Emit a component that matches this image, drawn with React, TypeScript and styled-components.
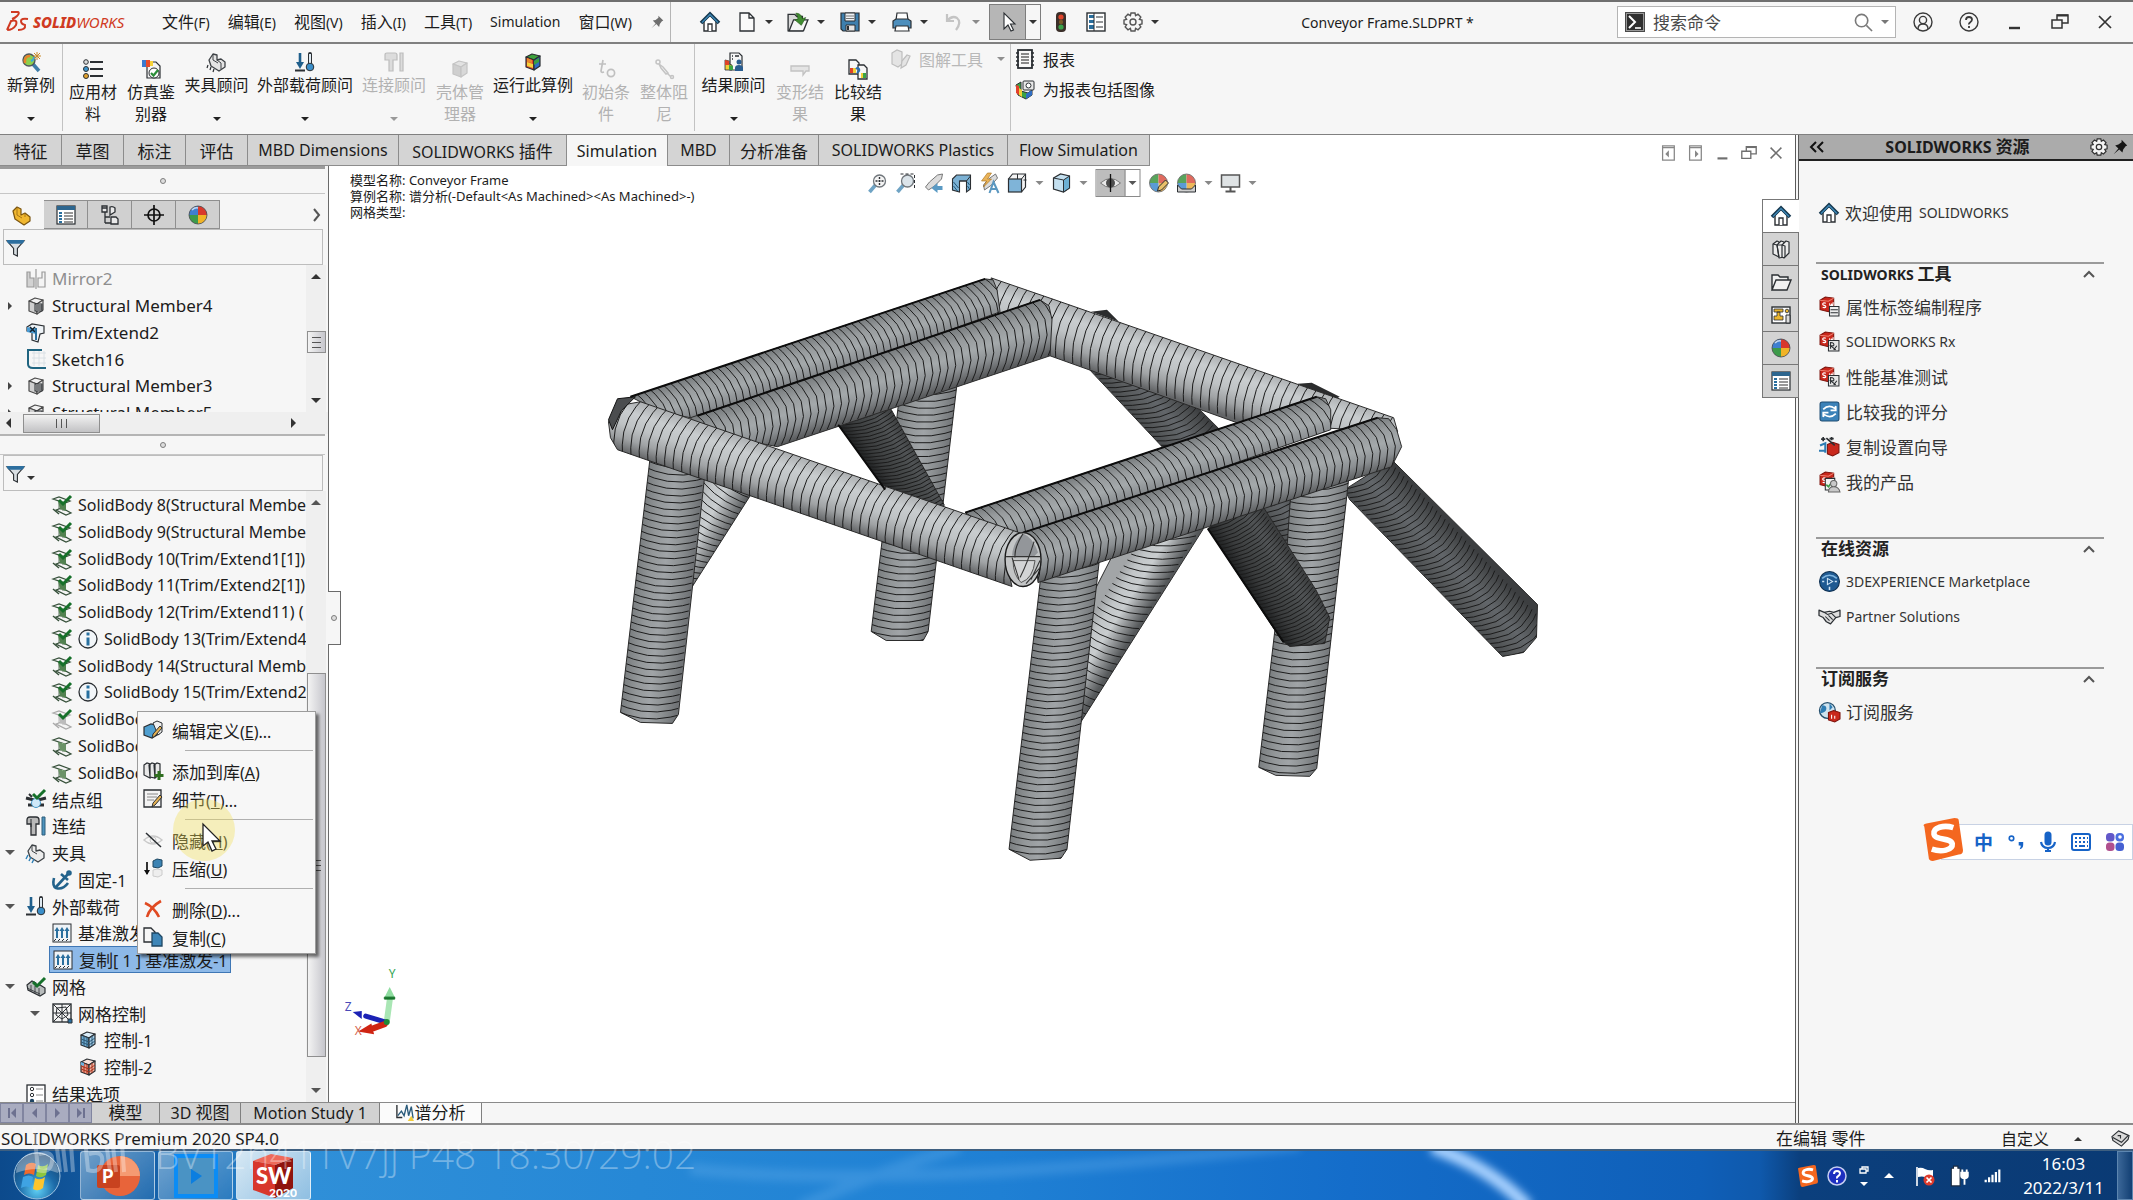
import React from 'react';
import styled, { createGlobalStyle, css } from 'styled-components';

const Global = createGlobalStyle`
  *, *::before, *::after { box-sizing: border-box; }
  body { margin: 0; background: #f6f6f6; }
  body, button, input { font-family: "Noto Sans", "Noto Sans CJK SC", sans-serif; color: #1c1c1c; }
  button { border: 0; padding: 0; background: none; }
  a { color: inherit; text-decoration: none; }
  ul { list-style: none; margin: 0; padding: 0; }
  svg { display: block; flex: none; }
`;

/* ---------- text ---------- */

const Cjk = styled.span<{ $size: number }>`
  font-size: ${(p) => p.$size}px;
`;

/* Chinese runs are set one step larger than the Latin text around them. */
function T({ s, z = 16 }: { s: string; z?: number }) {
  return (
    <span>
      {s.split(/([\u3000-\u9fff]+)/).map((part, i) =>
        i % 2 ? <Cjk key={i} $size={z}>{part}</Cjk> : part
      )}
    </span>
  );
}

/* ---------- icons, all on a 20 unit grid ---------- */

const K = '#2b2f33';
const B = '#2a6f9e';

const cube = (top: string, left: string, right: string, line = K) => (
  <g stroke={line} strokeWidth="1.2" strokeLinejoin="round">
    <path d="M3 5l6-3 8 2-6 4z" fill={top} />
    <path d="M3 5l8 3v10l-8-3z" fill={left} />
    <path d="M11 8l6-4v10l-6 4z" fill={right} />
  </g>
);

const swCube = (
  <g>
    <path d="M1 4l5-3 8 1v9l-5 4-8-2z" fill="#c9281c" stroke="#7c130c" />
    <path d="M1 4l8 1 5-3" fill="none" stroke="#f08070" />
    <path d="M6.5 7c-2-1-3 0-3 .8 0 1.3 3 1 3 2.4 0 1-2 1.3-3 .4M10 7l1 4 1-3 1 2 .5-4" fill="none" stroke="#fff" strokeWidth="1.1" />
  </g>
);

const check = <path d="M7 5l4 4 8-8" fill="none" stroke="#16702a" strokeWidth="3" />;

const beam = (g: string, l: string) => (
  <g>
    <path d="M1 4l6-2 11 4-5 2zM4 15l6-2 9 5-5 2z" fill="#f4f4f4" stroke={l} strokeWidth="1.2" />
    <path d="M6 6l8 2v8l-6-2z" fill={g} />
    <path d="M7 6v8M9 7v8M11 8v8M13 8v8" stroke={l} strokeWidth=".8" />
    <path d="M1 14l6 5" stroke={l} strokeWidth="1.5" />
  </g>
);

const house = (
  <g>
    <path d="M4 9v10h12V9l-6-6z" fill="#fff" stroke={K} strokeWidth="1.4" />
    <path d="M8 19v-7h4v7" fill="#fff" stroke={K} strokeWidth="1.3" />
    <path d="M1 11l9-9 9 9" fill="none" stroke="#17384f" strokeWidth="3.6" />
    <path d="M2 10.5l8-8 8 8" fill="none" stroke="#3d86b4" strokeWidth="1.4" />
  </g>
);

const ball = (
  <g>
    <path d="M10 10V1a9 9 0 0 0-9 9z" fill="#3f7fd0" />
    <path d="M10 10V1a9 9 0 0 1 9 9z" fill="#d8382c" />
    <path d="M10 10h9a9 9 0 0 1-9 9z" fill="#f0b326" />
    <path d="M10 10H1a9 9 0 0 0 9 9z" fill="#3d9a4a" />
    <circle cx="10" cy="10" r="9" fill="none" stroke="#44484c" strokeWidth=".8" />
    <path d="M4 5q3-3 6-2" stroke="#fff" strokeWidth="1.5" fill="none" opacity=".7" />
  </g>
);

const viewBall = (
  <g>
    <path d="M10 10V1a9 9 0 0 0-9 9z" fill="#58a45c" />
    <path d="M10 10V1a9 9 0 0 1 9 9z" fill="#e06a5e" />
    <path d="M10 10h9a9 9 0 0 1-9 9z" fill="#eeb85a" />
    <path d="M10 10H1a9 9 0 0 0 9 9z" fill="#5b9bd6" />
    <circle cx="10" cy="10" r="9" fill="none" stroke="#666" strokeWidth=".8" />
  </g>
);

const excitation = (
  <g>
    <rect x="1" y="1" width="18" height="18" fill="#eef3f7" stroke={K} />
    <path d="M5 15V6M10 15V6M15 15V6" stroke={B} strokeWidth="2" />
    <path d="M2.5 8L5 4l2.5 4M7.500 8L10 4l2.5 4M12.500 8L15 4l2.5 4" fill={B} />
    <path d="M2 18l2-2M6 18l2-2M10 18l2-2M14 18l2-2" stroke={K} />
  </g>
);

const mag = (fill: string) => (
  <g>
    <path d="M8 12l-6 7" stroke="#6fa3c4" strokeWidth="3.6" />
    <circle cx="12" cy="8" r="6" fill={fill} stroke="#70767b" strokeWidth="1.3" />
  </g>
);

const solidPart = (c1: string, c2: string) => (
  <path d="M2 8l4-6 4 1v5l4-1 4 3v5l-6 4-8-5z" fill={c1} stroke={c2} strokeWidth="1.3" strokeLinejoin="round" />
);

const pencil = <path d="M9 18l1-4 7-8 2 2-7 8z" fill="#e3b052" stroke={K} />;

const sogou = (
  <g>
    <path d="M2 4Q1 3 3 2.500L16 0q2 0 2 1l2 14q0 2-2 2L6 20q-2 0-2-2z" fill="#f4671f" />
    <path d="M15.500 4.500C11 3 6 4.500 6.500 7.500c.5 3 8 1.5 8.500 4.500.3 3-5 4-9.500 2.500" fill="none" stroke="#fff" strokeWidth="2.6" />
  </g>
);

const icons: Record<string, React.ReactNode> = {
  home: house,
  doc: <path d="M3 1h9l5 5v13H3zM12 1v5h5" fill="#fafafa" stroke={K} strokeWidth="1.3" />,
  open: <g><path d="M1 3h6l2 2h5v13H1z" fill="#d9d9d9" stroke={K} strokeWidth="1.2" /><path d="M2 18l4-10h13l-4 10z" fill="#f5f5f5" stroke={K} strokeWidth="1.2" /><path d="M8 2q5 0 6 5l3-1-4 7-6-5 3-.5Q10 4 8 2z" fill="#3f8b2f" stroke="#235a18" strokeWidth=".6" /></g>,
  save: <g><path d="M1 1h18v18H3l-2-2z" fill="#3d7fae" stroke={K} strokeWidth="1.2" /><path d="M5 1h10v8H5z" fill="#eef2f5" stroke={K} /><path d="M6 4h8M6 6.500h8" stroke="#777" /><path d="M6 13h9v6H6z" fill="#e6e6e6" stroke={K} /><path d="M8 14v4" stroke={K} strokeWidth="2" /></g>,
  print: <g><path d="M5 1h10l1 7H4z" fill="#fff" stroke={K} strokeWidth="1.2" /><path d="M1 9l3-2h12l3 2v7H1z" fill="#4d8fbd" stroke={K} strokeWidth="1.2" /><path d="M4 14h12l1 5H3z" fill="#fff" stroke={K} strokeWidth="1.2" /></g>,
  undo: <path d="M3 2v7h7M3 9q5-6 10-3 5 4-1 12" fill="none" stroke="#c4c4c4" strokeWidth="2.2" />,
  pointer: <path d="M6 1v16l4-4 3 6 2.5-1-3-6H17z" fill="#fff" stroke={K} strokeWidth="1.1" />,
  traffic: <g><rect x="5" y="0" width="10" height="20" rx="4" fill="#3b2f2a" /><circle cx="10" cy="5" r="2.6" fill="#e0452b" /><circle cx="10" cy="10" r="2.2" fill="#7a5a28" /><circle cx="10" cy="15" r="2.6" fill="#3ba24a" /></g>,
  list: <g><rect x="1" y="1" width="18" height="18" fill="#fff" stroke={K} strokeWidth="1.4" /><path d="M3 3h5v3H3zM3 8h5v3H3zM3 13h5v4H3z" fill={B} /><path d="M8 1v18M10 5h7M10 10h7M10 15h7" stroke={K} /></g>,
  gear: <g fill="none" stroke="#555" strokeWidth="1.4"><path d="M8 1h4l.6 2.600 2.400-1.400 2.800 2.800-1.400 2.400L19 8v4l-2.600.6 1.400 2.400-2.800 2.800-2.400-1.400L12 19H8l-.6-2.600L5 17.800 2.200 15l1.400-2.400L1 12V8l2.600-.6L2.200 5 5 2.200l2.400 1.400z" /><circle cx="10" cy="10" r="3" /></g>,
  paneGear: <g fill="#f4f4f4" stroke="#333" strokeWidth="1.4"><path d="M8 1h4l.6 2.600 2.400-1.400 2.800 2.800-1.400 2.400L19 8v4l-2.600.6 1.400 2.400-2.800 2.800-2.400-1.400L12 19H8l-.6-2.600L5 17.800 2.200 15l1.400-2.400L1 12V8l2.600-.6L2.200 5 5 2.200l2.400 1.400z" /><circle cx="10" cy="10" r="3" /></g>,
  pin: <path d="M12 1l7 7-2 1-3 4-1 4-4-4-7 6 6-7-4-4 4-1 4-3z" fill="#6e6e6e" />,
  pinDark: <path d="M12 1l7 7-2 1-3 4-1 4-4-4-7 6 6-7-4-4 4-1 4-3z" fill="#161616" />,
  cmd: <g><rect width="20" height="20" fill="#4a4a4a" /><rect x="1.5" y="1.5" width="17" height="17" fill="#2f2f2f" stroke="#999" /><path d="M4 4l6 6-6 6" fill="none" stroke="#fff" strokeWidth="2" /><path d="M10 16h6" stroke="#fff" strokeWidth="1.6" /></g>,
  search: <g fill="none" stroke="#7a7a7a" strokeWidth="1.7"><circle cx="8" cy="8" r="6.5" /><path d="M13 13l6 6" /></g>,
  user: <g fill="none" stroke="#3a3a3a" strokeWidth="1.4"><circle cx="10" cy="10" r="9" /><circle cx="10" cy="8" r="3.6" /><path d="M5 17q0-5 5-5t5 5" /></g>,
  help: <g fill="none" stroke="#3a3a3a" strokeWidth="1.4"><circle cx="10" cy="10" r="9" /><path d="M7 8q0-3 3-3t3 2.600q0 1.500-1.700 2.600T10 12.500M10 14v2" strokeWidth="1.8" /></g>,
  min: <path d="M5 16h11" stroke="#333" strokeWidth="2.4" />,
  restore: <g fill="none" stroke="#333" strokeWidth="1.5"><path d="M2 8h10v8H2zM7 8V3h11v8h-6" /><path d="M7 3.500h11" strokeWidth="2" /></g>,
  close: <path d="M4 4l12 12M16 4L4 16" stroke="#333" strokeWidth="1.7" />,
  paneL: <g fill="none" stroke="#555" strokeWidth="1.4"><path d="M4 2h13v16H4zM4 4h13" /><path d="M11 7l-4 4 4 4z" fill="#555" stroke="none" /></g>,
  paneR: <g fill="none" stroke="#555" strokeWidth="1.4"><path d="M4 2h13v16H4zM4 4h13" /><path d="M10 7l4 4-4 4z" fill="#555" stroke="none" /></g>,
  study: <g><path d="M11 11l7 8" stroke="#3f7da8" strokeWidth="3.6" /><circle cx="8" cy="8" r="6" fill="#8ccf4d" stroke="#50565b" strokeWidth="1.4" /><path d="M4 11Q3 4 9 4" stroke="#e8832a" strokeWidth="2.5" fill="none" /><path d="M10 9q3-1 3-4" stroke="#3fa7d8" strokeWidth="2" fill="none" /><path d="M16 0v8M12 4h8M13 1l6 6M19 1l-6 6" stroke="#c98a2a" /></g>,
  material: <g><path d="M7 3h13M7 10h13M7 17h13" stroke={K} strokeWidth="2.2" /><circle cx="3" cy="3" r="2.3" fill="#ddd" stroke={K} /><circle cx="3" cy="10" r="2.5" fill="#3e95cc" stroke={K} /><circle cx="3" cy="17" r="2.5" fill="#e2a12d" stroke={K} /></g>,
  evaluator: <g><path d="M6 3h9l4 4v12H6z" fill="#f4f4f4" stroke={K} strokeWidth="1.2" /><path d="M1 1h4v7H1z" fill="#3c7bd0" /><path d="M5 1h4v7H5z" fill="#e94b2c" /><path d="M9 2h3v5H9z" fill="#f6d33a" /><circle cx="13" cy="14" r="5" fill="#fff" stroke={K} /><path d="M10 14l2.500 2.500L17 11" stroke="#2c8f3a" strokeWidth="2.2" fill="none" /></g>,
  fixture: <g>{solidPart('#e4e4e4', '#3e4246')}<path d="M6 2v6l5 3M10 8l4 3v6" fill="none" stroke="#3e4246" /><path d="M1 13l-1 3M4 15l-1 3M7 17l-1 3" stroke={K} strokeWidth="1.2" /></g>,
  fixtureTree: <g>{solidPart('#ececec', '#3e4246')}<path d="M6 2v6l5 3" fill="none" stroke="#3e4246" /><path d="M2 12l-2 4M5 14l-2 4M8 16l-2 4" stroke="#2d7fb5" strokeWidth="1.4" /></g>,
  loads: <g><path d="M5 1v12" stroke="#1f5f8c" strokeWidth="2.6" /><path d="M1 10h8l-4 7z" fill="#1f5f8c" /><path d="M0 18.500h10" stroke={K} strokeWidth="2" /><path d="M15 2v12" stroke={K} strokeWidth="4" strokeLinecap="round" /><path d="M15 2v12" stroke="#dfeaf2" strokeWidth="2" /><circle cx="15" cy="15" r="3.8" fill="#3b8fca" stroke={K} /></g>,
  connectorOff: <g fill="#dcdcdc" stroke="#bdbdbd" strokeWidth="1.2"><path d="M1 3q0-2 2-2h8q2 0 2 2v5H9v11H5V8H1zM16 1h3v18h-3z" /></g>,
  connector: <g><path d="M1 4q0-3 3-3h6q3 0 3 3v4h-3v11H5V8H1z" fill="#b9b9b9" stroke={K} strokeWidth="1.3" /><path d="M5 3v8" stroke={K} /><path d="M16 1h3v18h-3z" fill="#4d93bd" stroke="#2c5c7a" /></g>,
  shellOff: cube('#e2e2e2', '#cfcfcf', '#d8d8d8', '#c4c4c4'),
  run: <g>{cube('#3da23c', '#e2412c', '#2f6dc4')}<path d="M4 6l5 2v3l-5-1z" fill="#e8872d" /><path d="M4 10l6 2v4l-6-2z" fill="#f5d23a" /><path d="M11 9l5-3v4l-5 3z" fill="#3aa040" /></g>,
  initialOff: <g fill="none" stroke="#c0c0c0" strokeWidth="1.7"><path d="M7 1L5 12q0 2 3 1M3 5h7" /><circle cx="15" cy="14" r="3.6" /></g>,
  dampOff: <g fill="none" stroke="#c4c4c4" strokeWidth="1.5"><circle cx="4" cy="3" r="2" /><path d="M5 5l4 3 5 6-2 1-5-6zM13 14l4 4" /><circle cx="18" cy="18" r="1.5" /></g>,
  results: <g><path d="M6 1h9l3 3v14H6z" fill="#f6f6f6" stroke={K} strokeWidth="1.2" /><path d="M1 8l4 1v3l3 1v5H1z" fill="#f1cf36" stroke={K} strokeWidth=".8" /><path d="M1 8l4 1v4H1z" fill="#df4228" /><path d="M5 13l4 1v4H5z" fill="#3aa344" /><circle cx="15" cy="10" r="2.5" fill="#285c8f" /><path d="M11 19v-3q0-3 4-3t4 3v3z" fill="#285c8f" /><path d="M8 4h1M11 4h4M8 7h1" stroke={K} strokeWidth="1.5" /></g>,
  deformOff: <path d="M1 7h18v5h-3l-3 4v-4H1z" fill="#e4e4e4" stroke="#c2c2c2" strokeWidth="1.3" />,
  compare: <g><path d="M1 1h7l3 3v11H1z" fill="#f6f6f6" stroke={K} strokeWidth="1.3" /><path d="M10 6h6l3 3v11h-9z" fill="#f6f6f6" stroke={K} strokeWidth="1.3" /><path d="M2 9h3v5H2z" fill="#df4228" /><path d="M5 9h3v5H5z" fill="#f1cf36" /><path d="M13 14h2v5h-2z" fill="#f1cf36" /><path d="M15 14h3v5h-3z" fill="#3aa344" /><path d="M8 10q2-2 3 0t-2 4" stroke="#2a6fb0" strokeWidth="2" fill="none" /></g>,
  plotOff: <g fill="#e4e4e4" stroke="#bebebe" strokeWidth="1.2"><path d="M1 4l5-3 5 2v12l-4 3-6-3z" /><path d="M11 12l5-6 3 1-4 9-5 3z" /></g>,
  report: <g><rect x="3" y="1" width="14" height="18" fill="#f8f8f8" stroke={K} strokeWidth="1.8" /><path d="M6 5h8M6 8h8M6 11h8M6 14h8" stroke="#666" strokeWidth="1.5" /><path d="M1 4h3M1 8h3M1 12h3M1 16h3M16 4h3M16 8h3M16 12h3M16 16h3" stroke={K} strokeWidth="1.5" /></g>,
  reportImg: <g><path d="M1 6l5-3v9l7 2 4-3v5l-6 4-8-4z" fill="#3aa344" stroke={K} /><path d="M1 6l3 1v9l-3-2z" fill="#e2412c" /><path d="M4 9l3 2v7l-3-2z" fill="#f1cf36" /><path d="M11 15l6-4v5l-6 4z" fill="#2f6dc4" /><rect x="8" y="2" width="11" height="9" rx="1" fill="#e8e8e8" stroke={K} /><circle cx="13.5" cy="6.5" r="2.5" fill="#fff" stroke={K} /></g>,
  partTab: <g><path d="M1 6l4-4 4 2v6l4-2 5 4v4l-6 4-9-6z" fill="#f0b730" stroke="#7b5510" strokeWidth="1.2" strokeLinejoin="round" /><path d="M5 3v7l5 3M13 9v3" stroke="#a87717" fill="none" /></g>,
  propTab: <g><rect x="1" y="1" width="18" height="18" fill="#fff" stroke={K} strokeWidth="1.2" /><path d="M1 1h18v4H1z" fill="#2d668f" /><path d="M3 8h3M3 11h3M3 14h3M3 17h3" stroke={B} strokeWidth="2" /><path d="M8 8h9M8 11h9M8 14h9M8 17h9" stroke="#777" strokeWidth="1.5" /></g>,
  configTab: <g fill="#e9e9e9" stroke={K} strokeWidth="1.3"><path d="M5 7v11" /><path d="M2 1h5v6H2zM2 3h5" /><path d="M5 12h5M5 18h6" /><path d="M10 2q3-1 5 1v4l-5 3zM11 12h5l2 2v5h-7z" /></g>,
  dimTab: <g fill="none" stroke="#111" strokeWidth="1.7"><circle cx="10" cy="10" r="6" /><path d="M10 0v20M0 10h20" /></g>,
  ball,
  funnel: <g><path d="M1 3h18l-7 8v8l-4-2v-6z" fill="#d9dfe3" stroke={K} strokeWidth="1.2" /><path d="M1 2h18v2l-2 2H3L1 4z" fill="#2d6f9f" /></g>,
  mirror: <g fill="#d2d2d2" stroke="#9a9a9a" strokeWidth="1.2"><path d="M1 3h3v6h4v9H1z" /><path d="M19 3h-3v6h-4v9h7z" fill="#f4f4f4" /><path d="M10 0v20" /></g>,
  member: <g>{cube('#f1f1f1', '#cfcfcf', '#e6e6e6', '#4a4a4a')}<rect x="9" y="8" width="7" height="7" fill="#c6c6c6" stroke={K} /><path d="M11 9v5M13 9v5M15 9v5" stroke={K} /></g>,
  trim: <g><path d="M1 4l5-3 12 2v7l-4 1-2 8-6-2V9L1 8z" fill="#eef3f7" stroke={K} strokeWidth="1.2" /><path d="M1 4l9 2v5L1 9z" fill="#4a9bd3" /><path d="M4 4l5 5M9 4L4 9" stroke="#12222e" strokeWidth="1.5" /><path d="M10 5v12" stroke={B} strokeWidth="2" /></g>,
  sketch: <g><path d="M6 4h14M6 9h14M6 14h14M8 2v15M13 2v15M18 2v15" stroke="#d5dde2" strokeWidth=".8" /><path d="M16 1H2v14q0 4 5 4h13" fill="none" stroke="#1f6480" strokeWidth="2" /></g>,
  body: <g>{beam('#66a35f', '#36503a')}{check}</g>,
  bodyOff: <g>{beam('#c9c9c9', '#a9a9a9')}{check}</g>,
  bodyPlain: beam('#8fbf86', '#36503a'),
  info: <g><circle cx="10" cy="10" r="9" fill="#f2f6f9" stroke={K} strokeWidth="1.3" /><path d="M10 3.500v3M10 8.500v8" stroke="#2870a0" strokeWidth="3" /></g>,
  joints: <g><path d="M0 9l8 2M20 9l-8 2M2 16h16" stroke={K} strokeWidth="3" /><circle cx="10" cy="14" r="4.5" fill="#cfe8f8" stroke="#4697c7" /><path d="M3 5l3 3" stroke={K} strokeWidth="2" />{check}</g>,
  anchor: <g fill="none" stroke="#23638c" strokeWidth="2.6"><path d="M16 4L4 17M2 8q-2 8 2 10 7 2 12-5M9 4l7 6" /><circle cx="17" cy="3" r="1.5" /></g>,
  excitation,
  mesh: <g><path d="M1 8l5-4 4 2v3l4-1 5 3v5l-5 3-12-6z" fill="#b8bcbc" stroke={K} strokeWidth="1.2" /><path d="M5 8v6M9 9v7M13 11v7M1 11l13 6" stroke={K} strokeWidth=".8" />{check}</g>,
  meshCtl: <g fill="none" stroke={K}><rect x="1" y="1" width="18" height="18" fill="#f3f3f3" strokeWidth="1.4" /><path d="M1 1l18 18M19 1L1 19M10 1v18M1 10h18M5 5l9-1 2 8-6 4-6-4z" /><path d="M16 16h4v4h-4z" fill={B} /></g>,
  ctl1: <g>{cube('#d9ecf8', '#6fa9cf', '#a6cde6')}<path d="M6 6v10M9 7v10M14 6v10M3 9l8 3 6-4M3 12l8 3 6-4" stroke="#2d5976" fill="none" /></g>,
  ctl2: <g>{cube('#fbe3dc', '#ee9a86', '#f3b9a8')}<path d="M6 6v10M9 7v10M14 6v10M3 9l8 3 6-4M3 12l8 3 6-4" stroke="#a8321c" fill="none" /><path d="M3 5l3 1v3l-3-1z" fill="#6ab1e0" /></g>,
  resultOpt: <g><rect x="1" y="1" width="18" height="22" fill="#fff" stroke={K} strokeWidth="1.3" /><g fill="#fff" stroke={K}><circle cx="6" cy="5" r="1.7" /><circle cx="6" cy="11" r="1.7" /></g><circle cx="6" cy="17" r="2.2" fill="#1d4464" /><path d="M10 5h7M10 11h7M10 17h7" stroke="#888" /></g>,
  editDef: <g><path d="M1 7l7-3 8 2v8l-7 4-8-3z" fill="#4f9fd0" stroke={K} strokeWidth="1.2" /><path d="M10 3l4-2 5 2v9l-4 3z" fill="#f0f0f0" stroke={K} />{pencil}</g>,
  addLib: <g><path d="M1 4l3-2 3 1v14l-6-3zM6 4l3-2 3 1v14l-5-1zM11 4l3-2 3 1v10l-5 4z" fill="#e9e9e9" stroke={K} strokeWidth="1.2" /><path d="M16 10v9M11.500 14.500h9" stroke="#2f6f1f" strokeWidth="3" /></g>,
  detail: <g><path d="M1 1h17v17H1z" fill="#f3f3f3" stroke={K} strokeWidth="1.3" /><path d="M4 5h11M4 8h10M4 11h7" stroke="#888" />{pencil}</g>,
  hide: <g fill="none"><path d="M1 10q9-8 18 0-9 8-18 0z" stroke="#c9c9c9" strokeWidth="1.5" /><circle cx="10" cy="10" r="3" stroke="#c9c9c9" /><path d="M3 3l15 14" stroke={K} strokeWidth="1.5" /></g>,
  suppress: <g><path d="M4 4v12" stroke="#111" strokeWidth="1.7" /><path d="M1 12h6l-3 5z" fill="#111" /><path d="M10 3l4-2 5 1v6l-4 2-5-1z" fill="#3c83b3" stroke="#1e4660" /><path d="M10 12l4-1 5 1v5l-4 2-5-1z" fill="#eee" stroke="#ccc" /></g>,
  del: <path d="M2 4q9 4 14 14M18 2Q7 8 4 18" fill="none" stroke="#e04a22" strokeWidth="2.6" />,
  copy: <g><path d="M1 1h7l4 4v10H1z" fill="#f6f6f6" stroke={K} strokeWidth="1.3" /><path d="M9 6h6l4 4v9H9z" fill="#3e86b8" stroke="#1f4763" strokeWidth="1.3" /></g>,
  zoomFit: <g>{mag('#f4f4f4')}<path d="M12 4v8M8 8h8" stroke={K} strokeWidth="1.4" strokeDasharray="2 1" /></g>,
  zoomArea: <g>{mag('#dbe4ea')}<path d="M5 1h14v14" fill="none" stroke={K} strokeDasharray="3 2" /></g>,
  prevView: <g><path d="M2 14l4-5 8-7 5-1-1 5-7 7-6 4z" fill="#dcdcdc" stroke="#777" /><path d="M19 13h-5v-3l-6 5 6 5v-3h5z" fill="#5a9ac4" /></g>,
  section: <g><path d="M1 6l4-4h14v14l-4 3V8H8v11l-7-2z" fill="#7bb1d4" stroke={K} strokeWidth="1.1" /><path d="M8 8h7l4-5" fill="none" stroke={K} /><path d="M2 9l5 6M2 13l4 5M16 9l2 3M16 13l2 3" stroke="#1f5678" /></g>,
  dynView: <g><path d="M4 12l5-6 7-5 2 4-6 7-7 5z" fill="#dcdcdc" stroke="#777" /><path d="M8 0L2 8h5l-3 6 8-8H8l4-6z" fill="#e9b35a" stroke="#a66b10" strokeWidth=".6" /><path d="M10 20l4-11 5 11M12 16h5" fill="none" stroke="#5a97c0" strokeWidth="2" /></g>,
  orient: <g><path d="M1 6l4-5h13v13l-4 5" fill="#f4f4f4" stroke={K} strokeWidth="1.2" /><rect x="1" y="6" width="13" height="13" fill="#7fb4d8" stroke={K} strokeWidth="1.2" /><path d="M14 6l4-5M10 1v5M16 7h3" stroke={K} /></g>,
  display: <g><path d="M2 5l7-4 9 2v12l-6 4-10-3z" fill="#c4e0f0" stroke={K} strokeWidth="1.2" /><path d="M12 7v12l6-4V3z" fill="#6db0d4" stroke={K} /><path d="M2 5l10 2" stroke={K} /></g>,
  eye: <g><path d="M0 10Q10 1 20 10 10 19 0 10z" fill="#e9e9e9" stroke="#777" /><circle cx="10" cy="10" r="4.5" fill="#4d4d4d" /><path d="M10 1v18" stroke="#111" strokeWidth="1.3" /></g>,
  appear: <g>{viewBall}<path d="M9 18l1-4 7-7 3 3-7 7z" fill="#e8c069" stroke={K} /></g>,
  scene: <g>{viewBall}<path d="M1 12v7h18v-7l-4 4H5z" fill="#cfcfcf" stroke={K} /></g>,
  monitor: <g><rect x="1" y="2" width="18" height="12" fill="#dfe3e5" stroke="#555" strokeWidth="1.5" /><path d="M10 14v4M5 18.500h10" stroke="#555" strokeWidth="2" /></g>,
  library: <g fill="#ececec" stroke={K} strokeWidth="1.2" strokeLinejoin="round"><path d="M2 5l4-3 2 1v15l-6-3z" /><path d="M6 6l4-4 3 1v15l-5 1z" /><path d="M11 6l4-4 3 1v11l-5 5-2-1z" /><path d="M2 5l4 1 2 12M6 6l5 0M11 6l3 1v11" fill="none" /></g>,
  folder: <path d="M1 18V3h6l2 2h8v3M1 18L5 8h15l-4 10z" fill="#f1f1f1" stroke={K} strokeWidth="1.4" />,
  palette: <g><rect x="1" y="2" width="18" height="16" fill="#fff" stroke={K} strokeWidth="1.4" /><path d="M3 4h9v3H3zM6 7h3v4h3v4H3v-4h3z" fill="#e9b52e" stroke={K} strokeWidth=".8" /><circle cx="16" cy="6" r="1.8" fill="#e9b52e" stroke={K} strokeWidth=".8" /><path d="M15 10h4v8h-4z" fill="#ddd" stroke={K} /></g>,
  swTab: <g>{swCube}<path d="M10 10h9v9h-9z" fill="#eee" stroke={K} /><path d="M11 13h7M11 16h7" stroke={K} /></g>,
  swRx: <g>{swCube}<path d="M9 9h10v10H9z" fill="#e6e6e6" stroke={K} /><path d="M11 17v-6q4 0 3 3h-3l5 4M17 14l-3 4" stroke={K} fill="none" /></g>,
  score: <g><rect x="1" y="1" width="18" height="18" rx="2" fill="#3c82b8" stroke="#1d4c73" /><path d="M4 8q5-5 11-1l1-2v4h-5M16 12q-5 5-11 1l-1 2v-4h5" fill="none" stroke="#fff" strokeWidth="1.6" /></g>,
  wizard: <g><path d="M8 8l5-2 6 2v8l-6 3-5-2z" fill="#c9281c" stroke="#7c130c" /><path d="M1 9l5-2v9M0 14h6" stroke="#2f7db4" strokeWidth="2" fill="none" /><path d="M7 2l8 7M4 1v4M2 3h4M12 1v3M10 2.500h4" stroke={K} strokeWidth="1.6" /></g>,
  products: <g>{swCube}<path d="M6 7h9v11H6z" fill="#f2f2f2" stroke={K} /><path d="M7 13l2 2 3-4" fill="none" stroke="#3a9b45" strokeWidth="1.5" /><path d="M9 20q0-5 5-5t6 5zM14 9a3 3 0 0 1 0 6 3 3 0 0 1 0-6z" fill="#c9c9c9" stroke="#666" /></g>,
  compass: <g><circle cx="10" cy="10" r="9.5" fill="#1f5a92" stroke="#0e2f50" /><path d="M3 7q7-6 14 0" fill="none" stroke="#7fb5e0" strokeWidth="1.5" /><path d="M8 7l5 3-5 3z" fill="none" stroke="#cfe4f5" /><path d="M10 15v3M3 10h2M15 10h2" stroke="#cfe4f5" strokeWidth="1.5" /></g>,
  hands: <g strokeLinejoin="round"><path d="M0 4l5 2 5-1 4 1 6-2v6l-4 1-5 6-4-2-3-4-4-2z" fill="#dedede" stroke={K} strokeWidth="1.2" /><path d="M6 10l4 4M9 9l4 4M5 6l3 2 4-1 4 4" fill="none" stroke={K} strokeWidth="1" /></g>,
  globe: <g><circle cx="8" cy="9" r="7.5" fill="#cfe3ef" stroke="#25506e" strokeWidth="1.3" /><path d="M3 4q4 0 4 3t-3 4-3 0M10 2l3 4-3 3" fill="#2f7db4" /><path d="M9 11l5-2 6 2v6l-5 3-6-2z" fill="#c9281c" stroke="#7c130c" /><path d="M12 13v4M15 14v3" stroke="#fff" /></g>,
  tag: <g fill="#d9d9d9" stroke={K} strokeWidth="1.2"><path d="M1 8l7-6 11 5-1 4-7 7L2 12z" /><path d="M2 9l9 5 7-7M7 7h3v3" fill="none" /></g>,
  chart: <g fill="none"><path d="M1 1v14h6" stroke={K} strokeWidth="1.5" /><path d="M2 13l4-5 3 5 3-12 2 12 3-10 2 13" stroke="#2a5a7a" strokeWidth="1.5" /><path d="M13 19l4-6 3 6z" fill="#f2cb3c" /></g>,
  sogou,
  winHelp: <g><circle cx="10" cy="10" r="9" fill="#1d2fc0" stroke="#c5cdf0" strokeWidth="1.5" /><path d="M7 8q0-3 3-3t3 2.600q0 1.500-1.700 2.400T10 12.500M10 14v2.500" stroke="#fff" strokeWidth="2" fill="none" /></g>,
  flag: <g><path d="M2 1v19" stroke="#fff" strokeWidth="1.6" /><path d="M3 2q4-1 7 1 4 2 8 1v8q-4 1-8-1-3-1-7 0z" fill="#fff" /><circle cx="14" cy="14" r="5.5" fill="#dd3a2c" /><path d="M11.500 11.500l5 5M16.500 11.500l-5 5" stroke="#fff" strokeWidth="1.7" /></g>,
  battery: <g><path d="M3 3h2V1h4v2h2v16H3z" fill="#fff" stroke="#1b2b40" /><path d="M13 4v3M17 4v3M12 7h6v3q0 2-3 2t-3-2zM15 12v6" stroke="#fff" strokeWidth="1.7" fill="#fff" /></g>,
  signal: <path d="M2 15v3M6 12v6M10 9v9M14 6v12M18 3v15" stroke="#fff" strokeWidth="2.6" />,
  mic: <g fill="none" stroke="#1663c7" strokeWidth="2.2"><path d="M10 3v7" strokeWidth="7" strokeLinecap="round" /><path d="M3 10q1 6 7 6t7-6M10 16v4M7 19h6" /></g>,
  keyboard: <g><rect x="1" y="2" width="18" height="16" rx="2" fill="#fff" stroke="#1663c7" strokeWidth="2" /><path d="M4 6h2M8 6h2M12 6h2M16 6h1M4 10h2M8 10h2M12 10h2M16 10h1M4 14h2M8 14h6M16 14h1" stroke="#1663c7" strokeWidth="2.2" /></g>,
  apps: <g><rect x="1" y="1" width="8.5" height="8.5" rx="3.5" fill="#6258c9" /><rect x="10.5" y="1" width="8.5" height="8.5" rx="4" fill="#4a6ee0" /><rect x="1" y="10.5" width="8.5" height="8.5" rx="3.5" fill="#b0508e" /><rect x="10.5" y="10.5" width="8.5" height="8.5" rx="3.5" fill="#4660d2" /><circle cx="15" cy="5" r="1.8" fill="#fff" /></g>,
  punct: <g><circle cx="5" cy="6" r="2.5" fill="none" stroke="#1663c7" strokeWidth="1.8" /><path d="M13 10h5v3q0 4-4 5 2-3 1-4h-2z" fill="#1663c7" /></g>,
};

function Icon({ n, s = 20 }: { n: string; s?: number }) {
  return (
    <svg width={s} height={s} viewBox="0 0 20 20" aria-hidden="true" overflow="visible">
      {icons[n]}
    </svg>
  );
}

const Caret = styled.span<{ $dir?: 'up' | 'down' | 'left' | 'right'; $tone?: string; $big?: boolean }>`
  flex: none;
  width: 0;
  height: 0;
  border: ${(p) => (p.$big ? 5 : 4)}px solid transparent;
  ${(p) => {
    const c = p.$tone ?? '#333';
    const d = p.$dir ?? 'down';
    if (d === 'down') return css`border-top-color: ${c}; border-bottom-width: 0;`;
    if (d === 'up') return css`border-bottom-color: ${c}; border-top-width: 0;`;
    if (d === 'left') return css`border-right-color: ${c}; border-left-width: 0;`;
    return css`border-left-color: ${c}; border-right-width: 0;`;
  }}
`;

/* ---------- window frame ---------- */

const Shell = styled.div`
  display: flex;
  flex-direction: column;
  height: 100vh;
  overflow: hidden;
  position: relative;
  background: #f6f6f6;
  font-size: 16px;
`;

const TitleBar = styled.header`
  flex: none;
  display: flex;
  align-items: center;
  height: 44px;
  border-top: 2px solid #6f6f6f;
  border-bottom: 2px solid #808080;
  font-size: 14px;
  white-space: nowrap;
`;

const Brand = styled.div`
  display: flex;
  align-items: center;
  gap: 4px;
  width: 162px;
  padding-left: 6px;
  color: #d03a22;
  font-size: 15px;
  font-style: italic;
  b { font-weight: 800; }
`;

const MenuNav = styled.nav`
  display: flex;
  align-items: center;
  gap: 18px;
  width: 509px;
  height: 100%;
  border-right: 1px solid #b5b5b5;
  button { font-size: 14px; line-height: 24px; }
`;

const QuickTools = styled.div`
  display: flex;
  align-items: center;
  width: 505px;
  height: 100%;
  padding-left: 29px;
`;

const Tool = styled.button<{ $w?: number }>`
  display: flex;
  align-items: center;
  gap: 8px;
  width: ${(p) => p.$w ?? 52}px;
`;

const PressedTool = styled.div`
  display: flex;
  height: 36px;
  width: 52px;
  border: 1px solid #7d7d7d;
  margin-right: 10px;
  button:first-child { width: 36px; background: #b6b6b6; display: grid; place-items: center; border-right: 1px solid #7d7d7d; }
  button:last-child { flex: 1; display: grid; place-items: center; }
`;

const DocTitle = styled.h1`
  flex: 1;
  margin: 0;
  padding-right: 18px;
  text-align: center;
  font-size: 14px;
  font-weight: 400;
`;

const SearchBox = styled.label`
  display: flex;
  align-items: center;
  gap: 8px;
  width: 279px;
  height: 32px;
  padding: 0 6px 0 7px;
  background: #fff;
  border: 1px solid #b4b4b4;
  input { flex: 1; min-width: 0; border: 0; outline: 0; background: none; font-size: 17px; padding: 0; }
  input::placeholder { color: #4a4a4a; opacity: 1; }
`;

const WindowTools = styled.div`
  display: flex;
  justify-content: space-between;
  padding: 0 18px 0 17px;
  width: 237px;
`;

/* ---------- ribbon ---------- */

const Ribbon = styled.div`
  flex: none;
  display: flex;
  height: 91px;
  border-bottom: 1px solid #808080;
  line-height: 21px;
`;

const RibbonGroup = styled.div`
  display: flex;
  margin-bottom: 3px;
  padding: 0 1px;
  border-right: 1px solid #c2c2c2;
`;

const RibbonCell = styled.button<{ $w: number; $two?: boolean; $off?: boolean }>`
  display: flex;
  flex-direction: column;
  align-items: center;
  gap: ${(p) => (p.$two ? 2 : 3)}px;
  width: ${(p) => p.$w}px;
  padding: ${(p) => (p.$two ? '15px 5px 0' : '8px 0 0')};
  font-size: 16px;
  line-height: ${(p) => (p.$two ? 22 : 21)}px;
  white-space: ${(p) => (p.$two ? 'normal' : 'nowrap')};
  word-break: break-all;
  color: ${(p) => (p.$off ? '#b2b2b2' : '#1c1c1c')};
  i { margin-top: 18px; display: flex; }
`;

const RibbonStack = styled.div`
  display: flex;
  flex-direction: column;
  padding: 0 4px;
`;

const RibbonRow = styled.button<{ $off?: boolean }>`
  display: flex;
  align-items: center;
  gap: 8px;
  height: 30px;
  font-size: 16px;
  color: ${(p) => (p.$off ? '#b8b8b8' : '#1c1c1c')};
  ${Caret} { margin-left: 6px; }
`;

/* ---------- main area ---------- */

const Main = styled.main`
  flex: 1;
  min-height: 0;
  display: flex;
  border-bottom: 2px solid #8a8a8a;
`;

const WorkColumn = styled.div`
  flex: 1;
  min-width: 0;
  display: flex;
  flex-direction: column;
  background: #fff;
`;

const TabStrip = styled.div`
  flex: none;
  display: flex;
  height: 31px;
  justify-content: space-between;
`;

const CommandTabs = styled.div`
  display: flex;
`;

const CommandTab = styled.button<{ $w: number; $on?: boolean }>`
  width: ${(p) => p.$w}px;
  white-space: nowrap;
  font-size: 16px;
  background: ${(p) => (p.$on ? '#f6f6f6' : '#d4d4d4')};
  border-right: 1px solid #8c8c8c;
  border-bottom: ${(p) => (p.$on ? 0 : 1)}px solid #8c8c8c;
`;

const DocTools = styled.div`
  display: flex;
  align-items: center;
  gap: 9px;
  padding: 4px 10px 0 0;
  opacity: .7;
`;

const Workspace = styled.div`
  flex: 1;
  min-height: 0;
  display: flex;
`;

const SidePanel = styled.aside`
  position: relative;
  flex: none;
  display: flex;
  flex-direction: column;
  width: 329px;
  background: #f6f6f6;
  border-right: 1px solid #6a6a6a;
`;

const Grip = styled.div<{ $h: number; $top?: boolean }>`
  flex: none;
  display: grid;
  place-items: center;
  height: ${(p) => p.$h}px;
  margin-right: 3px;
  border-top: ${(p) => (p.$top ? 3 : 2)}px solid ${(p) => (p.$top ? '#9b9b9b' : '#b4b4b4')};
  border-bottom: 1px solid #c6c6c6;
  &::after { content: ''; width: 6px; height: 6px; border: 1px solid #7d7d7d; border-radius: 50%; background: #ddd; }
`;

const ManagerTabs = styled.div`
  flex: none;
  display: flex;
  align-items: center;
  height: 35px;
  padding-top: 6px;
`;

const ManagerTab = styled.button<{ $on?: boolean }>`
  display: grid;
  place-items: center;
  width: 44px;
  height: 29px;
  background: ${(p) => (p.$on ? '#f6f6f6' : '#d0d0d0')};
  border: 1px solid ${(p) => (p.$on ? '#f6f6f6' : '#8f8f8f')};
  border-left-width: 0;
`;

const Chevron = styled.svg`
  margin-left: auto;
`;

const Filter = styled.div`
  flex: none;
  display: flex;
  align-items: center;
  gap: 2px;
  height: 36px;
  margin: 0 5px 0 3px;
  padding-left: 2px;
  border: 1px solid #bdbdbd;
  ${Caret} { margin-top: 10px; }
`;

const TreeBox = styled.div<{ $h?: number }>`
  display: flex;
  min-height: 0;
  ${(p) => (p.$h ? css`flex: none; height: ${p.$h}px;` : css`flex: 1;`)}
`;

const Tree = styled.ul<{ $size: number }>`
  flex: 1;
  min-width: 0;
  overflow: hidden;
  font-size: ${(p) => p.$size}px;
`;

const TreeRow = styled.li<{ $level: number; $off?: boolean; $on?: boolean }>`
  position: relative;
  display: flex;
  align-items: center;
  gap: 6px;
  height: 27px;
  padding-left: ${(p) => p.$level * 26}px;
  white-space: nowrap;
  color: ${(p) => (p.$off ? '#8e8e8e' : '#1c1c1c')};
  &:nth-child(4n) { height: 26px; }
  ${(p) => p.$on && css`
    margin-left: 49px;
    padding-left: 3px;
    width: 182px;
    background: #8db9e8;
    border: 1px solid #3f77b5;
  `}
`;

const Twist = styled.span`
  position: absolute;
  left: 0;
  display: grid;
  width: 20px;
  place-items: center;
`;

const TwistInner = styled(Twist)`
  left: 25px;
`;

const Scroll = styled.div`
  flex: none;
  display: flex;
  flex-direction: column;
  align-items: center;
  width: 20px;
  margin-right: 2px;
  padding: 9px 0;
  background: #efefef;
`;

const Thumb = styled.div<{ $before: number; $size: number }>`
  flex: 0 1 ${(p) => p.$size}px;
  display: grid;
  place-items: center;
  width: 19px;
  margin: ${(p) => p.$before}px 0 auto;
  border: 1px solid #8f8f8f;
  background: linear-gradient(90deg, #f3f3f3, #c6c6cc);
  &::after { content: ''; width: 9px; height: 11px; background: repeating-linear-gradient(#555 0 1px, transparent 1px 5px); }
`;

const HScroll = styled.div`
  flex: none;
  display: flex;
  align-items: center;
  height: 22px;
  padding: 0 32px 0 6px;
  background: #efefef;
  ${Caret}:last-child { margin-left: auto; }
`;

const HThumb = styled.div`
  display: grid;
  place-items: center;
  width: 77px;
  height: 19px;
  margin-left: 12px;
  border: 1px solid #8f8f8f;
  background: linear-gradient(#f2f2f2, #c2c2c4);
  &::after { content: ''; width: 11px; height: 9px; background: repeating-linear-gradient(90deg, #555 0 1px, transparent 1px 5px); }
`;

const PanelHandle = styled.button`
  position: absolute;
  left: 328px;
  top: 425px;
  display: grid;
  place-items: center;
  width: 13px;
  height: 54px;
  background: #f6f6f6;
  border: 1px solid #6a6a6a;
  border-left: 0;
  z-index: 2;
  &::after { content: ''; width: 6px; height: 6px; border: 1px solid #7d7d7d; border-radius: 50%; background: #ddd; }
`;

const ContextMenu = styled.div`
  position: absolute;
  z-index: 3;
  left: 137px;
  bottom: 148px;
  width: 179px;
  padding: 4px 2px 2px 5px;
  background: #f7f7f7;
  border: 1px solid #9c9c9c;
  box-shadow: 3px 3px 3px rgba(0, 0, 0, .55);
  font-size: 16px;
  hr { height: 1px; margin: 6px 0 6px 42px; border: 0; background: #b0b0b0; }
`;

const ContextItem = styled.button`
  display: flex;
  align-items: center;
  gap: 9px;
  width: 100%;
  height: 28px;
  font-size: 16px;
  white-space: nowrap;
`;

const Pointer = styled.svg`
  position: absolute;
  z-index: 4;
  left: 170px;
  bottom: 240px;
`;

/* ---------- viewport ---------- */

const Viewport = styled.section`
  position: relative;
  flex: 1;
  min-width: 0;
  background: #fff;
  & > svg { position: absolute; width: 100%; height: 100%; }
`;

const StudyInfo = styled.div`
  position: absolute;
  left: 21px;
  top: 6px;
  font-size: 13px;
  line-height: 16px;
  p { margin: 0; }
`;

const HeadsUp = styled.div`
  position: absolute;
  top: 2px;
  left: 50%;
  transform: translateX(-50%);
  display: flex;
  align-items: center;
  gap: 8px;
  height: 30px;
`;

const EyeTool = styled.div`
  display: flex;
  height: 28px;
  border: 1px solid #8a8a8a;
  button { display: grid; place-items: center; width: 14px; }
  button:first-child { width: 29px; background: #bdbdbd; border-right: 1px solid #8a8a8a; }
`;

const TaskTabs = styled.div`
  position: absolute;
  z-index: 2;
  right: -4px;
  top: 33px;
  display: flex;
  flex-direction: column;
`;

const TaskTab = styled.button<{ $on?: boolean }>`
  display: grid;
  place-items: center;
  width: 37px;
  height: 34px;
  background: ${(p) => (p.$on ? '#fff' : '#d3d3d3')};
  border: 1px solid #777;
  border-right-width: ${(p) => (p.$on ? 0 : 1)}px;
  & + & { border-top: 0; height: 33px; }
`;

const StudyTabs = styled.div`
  flex: none;
  display: flex;
  height: 21px;
  background: #f6f6f6;
  border-top: 1px solid #8a8a8a;
`;

const StepButton = styled.button`
  display: flex;
  align-items: center;
  justify-content: center;
  gap: 1px;
  width: 23px;
  background: #a9acc0;
  border: 1px solid #8185a0;
`;

const StepBar = styled.span`
  width: 2px;
  height: 10px;
  background: #6d7190;
`;

const StudyTab = styled.button<{ $w: number; $on?: boolean }>`
  display: flex;
  align-items: center;
  justify-content: center;
  gap: 1px;
  width: ${(p) => p.$w}px;
  font-size: 16px;
  line-height: 20px;
  white-space: nowrap;
  background: ${(p) => (p.$on ? '#fbfbfb' : '#d2d2d2')};
  border-right: 1px solid #808080;
`;

/* ---------- task pane ---------- */

const TaskPane = styled.aside`
  flex: none;
  width: 338px;
  background: #f6f6f6;
  border-left: 4px double #5a5a5a;
`;

const PaneHead = styled.div`
  display: flex;
  align-items: center;
  gap: 4px;
  height: 26px;
  padding: 0 5px 0 10px;
  background: #ababab;
  border-bottom: 2px solid #1f1f1f;
  h2 { flex: 1; margin: 0; text-align: center; font-size: 16px; line-height: 24px; }
`;

const PaneBody = styled.div`
  padding: 34px 29px 0 17px;
`;

const PaneLink = styled.a`
  display: flex;
  align-items: center;
  gap: 6px;
  height: 35px;
  padding-left: 3px;
  font-size: 14px;
  color: #333;
`;

const Section = styled.section<{ $gap: number }>`
  margin-top: ${(p) => p.$gap}px;
  border-top: 2px solid #9a9a9a;
  h3 {
    display: flex;
    justify-content: space-between;
    align-items: center;
    height: 20px;
    margin: 0 0 5px;
    padding: 0 8px 0 5px;
    font-size: 14px;
    line-height: 20px;
    color: #222;
  }
`;

const ImeBar = styled.div`
  position: absolute;
  right: 0;
  top: 824px;
  display: flex;
  align-items: center;
  justify-content: space-between;
  width: 192px;
  height: 36px;
  padding: 0 7px 0 32px;
  background: #fff;
  border: 1px solid #c8d2e4;
  color: #1663c7;
  font-size: 19px;
  font-weight: 700;
`;

const ImeLogo = styled.div`
  position: absolute;
  left: -22px;
  top: -7px;
`;

/* ---------- status + taskbar ---------- */

const StatusBar = styled.footer`
  flex: none;
  display: flex;
  align-items: center;
  height: 24px;
  padding: 3px 3px 0 1px;
  font-size: 17px;
  line-height: 20px;
  white-space: nowrap;
  & > :first-child { flex: 1; }
`;

const StatusCell = styled.span<{ $w: number }>`
  width: ${(p) => p.$w}px;
`;

const Taskbar = styled.footer`
  position: relative;
  flex: none;
  display: flex;
  height: 51px;
  border-top: 2px solid #3e5f80;
  background: linear-gradient(90deg, #0c4a8c 0, #1560a8 150px, #2f8fd8 310px, #2688d6 640px, #1f80d4 1000px, #146dca 1350px, #0f5fb8 1700px, #0f59ac 1760px, #0b3f7d 1800px, #0a3a74 100%);
`;

const Glow = styled.svg`
  position: absolute;
  inset: 0;
  width: 100%;
  height: 100%;
`;

const Start = styled.button`
  position: relative;
  width: 80px;
  display: grid;
  place-items: center;
  padding-right: 6px;
`;

const TaskButton = styled.button<{ $on?: boolean }>`
  position: relative;
  display: grid;
  place-items: center;
  width: 75px;
  margin-right: 3px;
  border: 1px solid rgba(255, 255, 255, .5);
  border-radius: 3px;
  background: ${(p) => (p.$on ? 'linear-gradient(135deg, #d6e8f4, #8fbfe2)' : 'linear-gradient(135deg, rgba(190,220,240,.55), rgba(60,130,190,.35))')};
`;

const Tray = styled.div`
  position: relative;
  margin-left: auto;
  display: flex;
  align-items: center;
  width: 337px;
  color: #fff;
`;

const TrayCell = styled.button<{ $w: number }>`
  display: flex;
  flex-direction: column;
  align-items: center;
  gap: 8px;
  width: ${(p) => p.$w}px;
`;

const Clock = styled.time`
  flex: 1;
  text-align: center;
  font-size: 17px;
  line-height: 24px;
`;

const ShowDesktop = styled.button`
  width: 16px;
  height: 100%;
  border: 1px solid #5d86b0;
  background: linear-gradient(90deg, #3b6798, #123f73);
`;

const Watermark = styled.div`
  position: absolute;
  z-index: 5;
  left: 30px;
  bottom: 18px;
  display: flex;
  align-items: center;
  gap: 23px;
  color: rgba(255, 255, 255, .34);
  font-family: "Open Sans", sans-serif;
  font-size: 39px;
  font-weight: 300;
  line-height: 48px;
  white-space: nowrap;
  pointer-events: none;
`;

/* ---------- the meshed frame ---------- */

type P = [number, number];
type Tone = 'mid' | 'light' | 'leg' | 'dark' | 'dim' | 'pale';

const tones: Record<Tone, string[]> = {
  mid: ['#777b7d', '#979b9d', '#a4a9ab', '#8b8f92', '#5a5c5e'],
  light: ['#acafb1', '#c9cdcf', '#bfc3c5', '#a0a3a5', '#636567'],
  leg: ['#7a7e80', '#939799', '#a0a4a7', '#8d9193', '#707376'],
  dark: ['#1f2122', '#3a3c3d', '#454849', '#505355', '#3c3e3f'],
  dim: ['#4a4d4f', '#5a5d5f', '#62666a', '#515456', '#3c3e40'],
  pale: ['#a2a5a7', '#c2c6c8', '#c9cdcf', '#8e9193', '#55585a'],
};

interface TubeSpec {
  id: string;
  shape: P[];
  e1: [P, P];
  e2: [P, P];
  pitch: number;
  bend: number;
  tone: Tone;
}

const mix = (a: P, b: P, t: number): P => [a[0] + (b[0] - a[0]) * t, a[1] + (b[1] - a[1]) * t];
const pts = (list: P[]) => list.map((p) => p.map((v) => v.toFixed(1)).join(',')).join(' ');

/* e1 and e2 are the two long edges; rings are strung between them. */
function Tube({ id, shape, e1, e2, pitch, bend, tone }: TubeSpec) {
  const dx = e1[1][0] - e1[0][0];
  const dy = e1[1][1] - e1[0][1];
  const len = Math.hypot(dx, dy);
  const ux = dx / len;
  const uy = dy / len;
  const n = Math.round(len / pitch);
  const rings: string[] = [];
  for (let i = -10; i <= n + 10; i++) {
    const a = mix(e1[0], e1[1], i / n);
    const b = mix(e2[0], e2[1], i / n);
    const ring = [0, 0.12, 0.36, 0.64, 0.88, 1].map((u): P => {
      const m = mix(a, b, u);
      const k = bend * 4 * u * (1 - u);
      return [m[0] + ux * k, m[1] + uy * k];
    });
    rings.push(pts(ring));
  }
  const w = (e2[0][0] - e1[0][0]) * -uy + (e2[0][1] - e1[0][1]) * ux;
  const g1 = e1[0];
  const g2: P = [g1[0] - uy * w, g1[1] + ux * w];
  return (
    <g>
      <defs>
        <clipPath id={`clip-${id}`}><polygon points={pts(shape)} /></clipPath>
        <linearGradient id={`fill-${id}`} gradientUnits="userSpaceOnUse" x1={g1[0]} y1={g1[1]} x2={g2[0]} y2={g2[1]}>
          {tones[tone].map((c, i) => <stop key={i} offset={i / 4} stopColor={c} />)}
        </linearGradient>
      </defs>
      <polygon points={pts(shape)} fill={`url(#fill-${id})`} stroke="#2a2a2a" strokeWidth="1" />
      <g clipPath={`url(#clip-${id})`} fill="none" stroke="#1b1b1b" strokeWidth="1">
        {rings.map((r, i) => <polyline key={i} points={r} />)}
      </g>
    </g>
  );
}

const tubes: TubeSpec[] = [
  { id: 'legBack', shape: [[900, 390], [957, 383], [928, 632], [923, 641], [886, 641], [871, 632]], e1: [[900, 390], [871, 632]], e2: [[957, 390], [928, 632]], pitch: 7, bend: 5, tone: 'leg' },
  { id: 'braceBack', shape: [[838, 425], [890, 408], [944, 505], [935, 560], [885, 490]], e1: [[838, 425], [930, 555]], e2: [[890, 408], [982, 540]], pitch: 4, bend: 6, tone: 'dark' },
  { id: 'braceFar', shape: [[1085, 365], [1180, 390], [1222, 432], [1165, 450]], e1: [[1091, 370], [1165, 450]], e2: [[1143, 350], [1217, 430]], pitch: 6, bend: 8, tone: 'dim' },
  { id: 'braceLeft', shape: [[695, 470], [755, 488], [690, 590], [684, 560]], e1: [[715, 455], [650, 575]], e2: [[755, 487], [690, 590]], pitch: 7, bend: 4, tone: 'pale' },
  { id: 'legLeft', shape: [[650, 455], [705, 470], [678, 715], [672, 724], [640, 723], [620, 713]], e1: [[650, 455], [620, 713]], e2: [[705, 458], [677, 716]], pitch: 7, bend: 5, tone: 'leg' },
  { id: 'braceOut', shape: [[1345, 490], [1392, 460], [1538, 605], [1537, 638], [1524, 653], [1503, 657], [1350, 500]], e1: [[1350, 498], [1503, 657]], e2: [[1396, 468], [1549, 627]], pitch: 6, bend: 9, tone: 'dim' },
  { id: 'legRight', shape: [[1291, 495], [1350, 470], [1317, 769], [1310, 777], [1276, 776], [1259, 768]], e1: [[1291, 495], [1259, 768]], e2: [[1350, 490], [1317, 770]], pitch: 7, bend: 5, tone: 'leg' },
  { id: 'braceStub', shape: [[1250, 500], [1291, 493], [1287, 552]], e1: [[1250, 500], [1290, 550]], e2: [[1290, 480], [1330, 530]], pitch: 6, bend: 5, tone: 'dim' },
  { id: 'braceIn', shape: [[1208, 529], [1245, 500], [1262, 505], [1316, 590], [1330, 618], [1325, 644], [1290, 647], [1282, 641]], e1: [[1208, 529], [1285, 645]], e2: [[1256, 500], [1333, 618]], pitch: 4, bend: 6, tone: 'dark' },
  { id: 'braceFront', shape: [[1113, 555], [1205, 515], [1203, 530], [1080, 724], [1075, 650], [1090, 600]], e1: [[1150, 525], [1045, 690]], e2: [[1205, 522], [1082, 722]], pitch: 7, bend: 4, tone: 'pale' },
  { id: 'legFront', shape: [[1041, 575], [1100, 555], [1067, 850], [1061, 859], [1030, 861], [1009, 850]], e1: [[1041, 575], [1009, 850]], e2: [[1100, 570], [1067, 850]], pitch: 7, bend: 5, tone: 'leg' },
  { id: 'railFar', shape: [[991, 278], [1052, 299], [1394, 418], [1398, 432], [1240, 424], [1050, 356], [1001, 330]], e1: [[1010, 284], [1394, 416]], e2: [[996, 337], [1380, 470]], pitch: 9, bend: -5, tone: 'light' },
  { id: 'railBack', shape: [[630, 397], [985, 279], [993, 280], [997, 290], [1000, 312], [700, 420], [660, 412]], e1: [[630, 397], [985, 279]], e2: [[650, 440], [1005, 316]], pitch: 7, bend: 6, tone: 'mid' },
  { id: 'railInner', shape: [[690, 418], [1040, 300], [1049, 306], [1052, 320], [1050, 356], [777, 447], [700, 432]], e1: [[697, 416], [1040, 300]], e2: [[705, 470], [1048, 356]], pitch: 8, bend: 11, tone: 'mid' },
  { id: 'railEast', shape: [[965, 513], [1317, 397], [1326, 399], [1331, 410], [1331, 430], [1024, 537], [1000, 535]], e1: [[965, 513], [1317, 397]], e2: [[988, 555], [1340, 433]], pitch: 8, bend: 7, tone: 'mid' },
  { id: 'railSouth', shape: [[608, 422], [618, 406], [640, 402], [1022, 534], [1012, 545], [1008, 570], [1012, 587], [617, 450], [610, 438]], e1: [[640, 402], [1022, 534]], e2: [[622, 452], [1004, 586]], pitch: 9, bend: -6, tone: 'light' },
  { id: 'railFront', shape: [[1023, 533], [1378, 418], [1389, 419], [1397, 430], [1402, 447], [1392, 467], [1038, 583], [1036, 560]], e1: [[1023, 533], [1378, 418]], e2: [[1037, 583], [1392, 467]], pitch: 8, bend: 10, tone: 'mid' },
];

function FrameModel() {
  return (
    <svg viewBox="329 166 1466 937" role="img" aria-label="Conveyor Frame">
      <path d="M1091 312l16-2 12 12zM1298 384l14-1 28 14-10 6z" fill="#2b2c2d" />
      {tubes.map((t) => <Tube key={t.id} {...t} />)}
      <path d="M612 430l-4-10 9-21 18-2-14 14z" fill="#4b4d4f" stroke="#111" />
      <path d="M630 397L985 279M697 416l343-116M965 513l352-116M1023 533l355-115" stroke="#0c0c0c" strokeWidth="2" fill="none" />
      <path d="M838 425l47 65M1208 529l76 114" stroke="#0c0c0c" strokeWidth="2" />
      <ellipse cx="1023" cy="560" rx="18" ry="27" fill="#c3c5c6" stroke="#1a1a1a" strokeWidth="1.4" />
      <path d="M1023 534q-10 8-11 22l8 1h14l4-4q-5-15-15-19z" fill="#93969a" />
      <path d="M1013 561q0 14 8 22 12-4 14-22z" fill="#d3d4d5" stroke="#555" />
      <path d="M1023 534q-9 14-8 24M1006 557h34M1012 558l7 22M1034 542q-6 20-14 36M1026 584l14-16M1031 580l9-19" fill="none" stroke="#333" strokeWidth="1.1" />
      <g strokeLinecap="round">
        <path d="M386 1023l3-22" stroke="#a9e6b4" strokeWidth="6" />
        <path d="M389 988l5 10h-10z" fill="#8fdda0" />
        <path d="M384 998h10v2h-10z" fill="#17752b" stroke="#17752b" />
        <path d="M385 1023l-20-6" stroke="#1b22b5" strokeWidth="5" />
        <path d="M352 1013l9-1v8z" fill="#1b22b5" />
        <path d="M384 1025l-11 4" stroke="#cf2413" strokeWidth="6" />
        <path d="M360 1032l10-6 2 8z" fill="#cf2413" stroke="#cf2413" strokeWidth="2" />
        <circle cx="386" cy="1023" r="3" fill="#1f8a39" />
      </g>
      <g fontFamily="Noto Sans, sans-serif" fontSize="12">
        <text x="388" y="979" fill="#35a552">Y</text>
        <text x="344" y="1012" fill="#4a4ab8">Z</text>
        <text x="354" y="1036" fill="#d5644e">X</text>
      </g>
    </svg>
  );
}

/* ---------- data ---------- */

const menus = ['文件(F)', '编辑(E)', '视图(V)', '插入(I)', '工具(T)', 'Simulation', '窗口(W)'];

type CellSpec = [string, string, number, boolean, boolean];

const ribbon: CellSpec[] = [
  ['应用材料', 'material', 58, true, false],
  ['仿真鉴别器', 'evaluator', 58, true, false],
  ['夹具顾问', 'fixture', 73, false, false],
  ['外部载荷顾问', 'loads', 104, false, false],
  ['连接顾问', 'connectorOff', 74, false, true],
  ['壳体管理器', 'shellOff', 58, true, true],
  ['运行此算例', 'run', 88, false, false],
  ['初始条件', 'initialOff', 58, true, true],
  ['整体阻尼', 'dampOff', 58, true, true],
];

const ribbonResults: CellSpec[] = [
  ['结果顾问', 'results', 75, false, false],
  ['变形结果', 'deformOff', 58, true, true],
  ['比较结果', 'compare', 58, true, false],
];

const commandTabs: [string, number][] = [
  ['特征', 62], ['草图', 62], ['标注', 62], ['评估', 62], ['MBD Dimensions', 151],
  ['SOLIDWORKS 插件', 168], ['Simulation', 101], ['MBD', 62], ['分析准备', 89],
  ['SOLIDWORKS Plastics', 189], ['Flow Simulation', 142],
];

interface Row { label: string; icon: string; level?: number; open?: boolean; shut?: boolean; info?: boolean; off?: boolean; on?: boolean }

const featureRows: Row[] = [
  { label: 'Mirror2', icon: 'mirror', off: true },
  { label: 'Structural Member4', icon: 'member', shut: true },
  { label: 'Trim/Extend2', icon: 'trim' },
  { label: 'Sketch16', icon: 'sketch' },
  { label: 'Structural Member3', icon: 'member', shut: true },
  { label: 'Structural Member5', icon: 'member', shut: true },
];

const studyRows: Row[] = [
  { label: 'SolidBody 8(Structural Membe', icon: 'body', level: 2 },
  { label: 'SolidBody 9(Structural Membe', icon: 'body', level: 2 },
  { label: 'SolidBody 10(Trim/Extend1[1])', icon: 'body', level: 2 },
  { label: 'SolidBody 11(Trim/Extend2[1])', icon: 'body', level: 2 },
  { label: 'SolidBody 12(Trim/Extend11) (', icon: 'body', level: 2 },
  { label: 'SolidBody 13(Trim/Extend4', icon: 'body', level: 2, info: true },
  { label: 'SolidBody 14(Structural Memb', icon: 'body', level: 2 },
  { label: 'SolidBody 15(Trim/Extend2', icon: 'body', level: 2, info: true },
  { label: 'SolidBody 16(Structural Memb', icon: 'bodyOff', level: 2 },
  { label: 'SolidBody', icon: 'bodyPlain', level: 2 },
  { label: 'SolidBody', icon: 'bodyPlain', level: 2 },
  { label: '结点组', icon: 'joints' },
  { label: '连结', icon: 'connector' },
  { label: '夹具', icon: 'fixtureTree', open: true },
  { label: '固定-1', icon: 'anchor', level: 2 },
  { label: '外部载荷', icon: 'loads', open: true },
  { label: '基准激发', icon: 'excitation', level: 2 },
  { label: '复制[ 1 ] 基准激发-1', icon: 'excitation', level: 2, on: true },
  { label: '网格', icon: 'mesh', open: true },
  { label: '网格控制', icon: 'meshCtl', level: 2, open: true },
  { label: '控制-1', icon: 'ctl1', level: 3 },
  { label: '控制-2', icon: 'ctl2', level: 3 },
  { label: '结果选项', icon: 'resultOpt' },
];

function TreeList({ rows, size, name }: { rows: Row[]; size: number; name: string }) {
  return (
    <Tree $size={size} aria-label={name}>
      {rows.map((r, i) => {
        const level = r.level ?? 1;
        const Mark = level > 1 ? TwistInner : Twist;
        return (
          <TreeRow key={i} $level={level} $off={r.off} $on={r.on}>
            {r.open && <Mark><Caret $tone="#555" $big /></Mark>}
            {r.shut && <Mark><Caret $dir="right" $tone="#444" /></Mark>}
            <Icon n={r.icon} />
            {r.info && <Icon n="info" />}
            <T s={r.label} z={17} />
          </TreeRow>
        );
      })}
    </Tree>
  );
}

function Cells({ items }: { items: CellSpec[] }) {
  return (
    <>
      {items.map(([label, icon, w, two, off]) => (
        <RibbonCell key={label} $w={w} $two={two} $off={off}>
          <Icon n={icon} />
          <span>{label}</span>
          {!two && <i><Caret $tone={off ? '#999' : '#222'} /></i>}
        </RibbonCell>
      ))}
    </>
  );
}

const Up = () => (
  <svg width="14" height="10" viewBox="0 0 14 10"><path d="M2 8l5-5 5 5" fill="none" stroke="#555" strokeWidth="2" /></svg>
);

const paneLinks: { title: string; gap: number; links: [string, string][] }[] = [
  { title: 'SOLIDWORKS 工具', gap: 32, links: [['属性标签编制程序', 'swTab'], ['SOLIDWORKS Rx', 'swRx'], ['性能基准测试', 'swRx'], ['比较我的评分', 'score'], ['复制设置向导', 'wizard'], ['我的产品', 'products']] },
  { title: '在线资源', gap: 38, links: [['3DEXPERIENCE Marketplace', 'compass'], ['Partner Solutions', 'hands']] },
  { title: '订阅服务', gap: 33, links: [['订阅服务', 'globe']] },
];

const contextGroups: [string, string, string, string][][] = [
  [['编辑定义', 'E', '...', 'editDef']],
  [['添加到库', 'A', '', 'addLib'], ['细节', 'T', '...', 'detail']],
  [['隐藏', 'H', '', 'hide'], ['压缩', 'U', '', 'suppress']],
  [['删除', 'D', '...', 'del'], ['复制', 'C', '', 'copy']],
];

export default function App() {
  return (
    <Shell>
      <Global />
      <TitleBar>
        <Brand>
          <svg width="23" height="24" viewBox="0 0 23 24">
            <path d="M5 2h7q2 1-1 4-2 2-5 3M1 20l4-9q7-2 5 4-3 5-9 5M22 9q-7-1-7 2t4 4q1 5-7 5" fill="none" stroke="#d03a22" strokeWidth="2" />
          </svg>
          <span><b>SOLID</b>WORKS</span>
        </Brand>
        <MenuNav>
          {menus.map((m) => <button key={m}><T s={m} /></button>)}
          <Icon n="pin" s={14} />
        </MenuNav>
        <QuickTools>
          <Tool $w={37} aria-label="主页"><Icon n="home" /></Tool>
          <Tool $w={50} aria-label="新建"><Icon n="doc" /><Caret /></Tool>
          <Tool $w={53} aria-label="打开"><Icon n="open" s={22} /><Caret /></Tool>
          <Tool aria-label="保存"><Icon n="save" /><Caret /></Tool>
          <Tool aria-label="打印"><Icon n="print" /><Caret /></Tool>
          <Tool $w={45} aria-label="撤消"><Icon n="undo" /><Caret $tone="#8a8a8a" /></Tool>
          <PressedTool>
            <button aria-label="选择"><Icon n="pointer" /></button>
            <button aria-label="选择选项"><Caret /></button>
          </PressedTool>
          <Tool $w={35} aria-label="重建"><Icon n="traffic" /></Tool>
          <Tool $w={37} aria-label="文件属性"><Icon n="list" /></Tool>
          <Tool $w={50} aria-label="选项"><Icon n="gear" /><Caret /></Tool>
        </QuickTools>
        <DocTitle>Conveyor Frame.SLDPRT *</DocTitle>
        <SearchBox>
          <Icon n="cmd" />
          <input placeholder="搜索命令" aria-label="搜索命令" />
          <Icon n="search" s={19} />
          <Caret $tone="#777" />
        </SearchBox>
        <WindowTools>
          {['user', 'help', 'min', 'restore', 'close'].map((n) => (
            <button key={n} aria-label={n}><Icon n={n} /></button>
          ))}
        </WindowTools>
      </TitleBar>

      <Ribbon>
        <RibbonGroup>
          <Cells items={[['新算例', 'study', 60, false, false]]} />
        </RibbonGroup>
        <RibbonGroup><Cells items={ribbon} /></RibbonGroup>
        <RibbonGroup>
          <Cells items={ribbonResults} />
          <RibbonStack>
            <RibbonRow $off><Icon n="plotOff" />图解工具<Caret $tone="#8f8f8f" /></RibbonRow>
          </RibbonStack>
        </RibbonGroup>
        <RibbonStack>
          <RibbonRow><Icon n="report" />报表</RibbonRow>
          <RibbonRow><Icon n="reportImg" />为报表包括图像</RibbonRow>
        </RibbonStack>
      </Ribbon>

      <Main>
        <WorkColumn>
          <TabStrip>
            <CommandTabs>
              {commandTabs.map(([label, w]) => (
                <CommandTab key={label} $w={w} $on={label === 'Simulation'}><T s={label} z={17} /></CommandTab>
              ))}
            </CommandTabs>
            <DocTools>
              {['paneL', 'paneR', 'min', 'restore', 'close'].map((n) => (
                <button key={n} aria-label={n}><Icon n={n} s={18} /></button>
              ))}
            </DocTools>
          </TabStrip>
          <Workspace>
            <SidePanel>
              <Grip $h={28} $top />
              <ManagerTabs>
                {['partTab', 'propTab', 'configTab', 'dimTab', 'ball'].map((n, i) => (
                  <ManagerTab key={n} $on={i === 0} aria-label={n}><Icon n={n} /></ManagerTab>
                ))}
                <Chevron width="20" height="14" viewBox="0 0 20 14"><path d="M6 1l5 6-5 6" fill="none" stroke="#555" strokeWidth="2" /></Chevron>
              </ManagerTabs>
              <Filter><Icon n="funnel" s={19} /></Filter>
              <TreeBox $h={147}>
                <TreeList rows={featureRows} size={17} name="特征树" />
                <Scroll>
                  <Caret $dir="up" $big />
                  <Thumb $before={52} $size={22} />
                  <Caret $big />
                </Scroll>
              </TreeBox>
              <HScroll><Caret $dir="left" $big /><HThumb /><Caret $dir="right" $big /></HScroll>
              <Grip $h={21} />
              <Filter><Icon n="funnel" s={19} /><Caret /></Filter>
              <TreeBox>
                <TreeList rows={studyRows} size={16} name="算例树" />
                <Scroll>
                  <Caret $dir="up" $big $tone="#555" />
                  <Thumb $before={168} $size={384} />
                  <Caret $big $tone="#555" />
                </Scroll>
              </TreeBox>
              <PanelHandle aria-label="折叠面板" />
              <ContextMenu role="menu">
                {contextGroups.map((g, i) => (
                  <React.Fragment key={i}>
                    {i > 0 && <hr />}
                    {g.map(([label, key, tail, icon]) => (
                      <ContextItem key={label} role="menuitem">
                        <Icon n={icon} />
                        <span><Cjk $size={17}>{label}</Cjk>(<u>{key}</u>){tail}</span>
                      </ContextItem>
                    ))}
                  </React.Fragment>
                ))}
              </ContextMenu>
              <Pointer width="68" height="64" viewBox="0 0 68 64">
                <circle cx="34" cy="32" r="31" fill="#f2e05a" opacity=".38" />
                <path d="M33 26v22l5-4 4 9 4-2-4-8h8z" fill="#fff" stroke="#222" strokeWidth="1.3" />
              </Pointer>
            </SidePanel>
            <Viewport>
              <FrameModel />
              <StudyInfo>
                <p><T s="模型名称: Conveyor Frame" z={13} /></p>
                <p><T s="算例名称: 谱分析(-Default<As Machined><As Machined>-)" z={13} /></p>
                <p><T s="网格类型:" z={13} /></p>
              </StudyInfo>
              <HeadsUp>
                {['zoomFit', 'zoomArea', 'prevView', 'section', 'dynView', 'orient'].map((n) => (
                  <button key={n} aria-label={n}><Icon n={n} /></button>
                ))}
                <Caret $tone="#888" />
                <button aria-label="显示样式"><Icon n="display" /></button>
                <Caret $tone="#888" />
                <EyeTool>
                  <button aria-label="隐藏或显示"><Icon n="eye" /></button>
                  <button aria-label="隐藏选项"><Caret $tone="#555" /></button>
                </EyeTool>
                <button aria-label="外观"><Icon n="appear" /></button>
                <button aria-label="布景"><Icon n="scene" /></button>
                <Caret $tone="#888" />
                <button aria-label="视图设定"><Icon n="monitor" /></button>
                <Caret $tone="#888" />
              </HeadsUp>
              <TaskTabs>
                {['home', 'library', 'folder', 'palette', 'ball', 'propTab'].map((n, i) => (
                  <TaskTab key={n} $on={i === 0} aria-label={n}><Icon n={n} /></TaskTab>
                ))}
              </TaskTabs>
            </Viewport>
          </Workspace>
          <StudyTabs>
            <StepButton aria-label="第一个"><StepBar /><Caret $dir="left" $tone="#6d7190" $big /></StepButton>
            <StepButton aria-label="上一个"><Caret $dir="left" $tone="#6d7190" $big /></StepButton>
            <StepButton aria-label="下一个"><Caret $dir="right" $tone="#6d7190" $big /></StepButton>
            <StepButton aria-label="最后一个"><Caret $dir="right" $tone="#6d7190" $big /><StepBar /></StepButton>
            <StudyTab $w={68}><T s="模型" z={17} /></StudyTab>
            <StudyTab $w={81}><T s="3D 视图" z={17} /></StudyTab>
            <StudyTab $w={139}>Motion Study 1</StudyTab>
            <StudyTab $w={102} $on><Icon n="chart" s={18} /><T s="谱分析" z={17} /></StudyTab>
          </StudyTabs>
        </WorkColumn>
        <TaskPane>
          <PaneHead>
            <svg width="16" height="14" viewBox="0 0 16 14"><path d="M7 2L2 7l5 5M14 2L9 7l5 5" fill="none" stroke="#111" strokeWidth="2" /></svg>
            <h2><T s="SOLIDWORKS 资源" z={17} /></h2>
            <Icon n="paneGear" s={18} />
            <Icon n="pinDark" s={16} />
          </PaneHead>
          <PaneBody>
            <PaneLink href="#welcome"><Icon n="home" /><T s="欢迎使用" z={17} /><span>SOLIDWORKS</span></PaneLink>
            {paneLinks.map((sec) => (
              <Section key={sec.title} $gap={sec.gap}>
                <h3><T s={sec.title} z={17} /><Up /></h3>
                {sec.links.map(([label, icon]) => (
                  <PaneLink key={label} href="#resource"><Icon n={icon} s={21} /><T s={label} z={17} /></PaneLink>
                ))}
              </Section>
            ))}
          </PaneBody>
        </TaskPane>
      </Main>

      <StatusBar>
        <span>SOLIDWORKS Premium 2020 SP4.0</span>
        <StatusCell $w={225}><T s="在编辑 零件" z={17} /></StatusCell>
        <StatusCell $w={73}><T s="自定义" /></StatusCell>
        <Caret $dir="up" />
        <StatusCell $w={29} />
        <Icon n="tag" s={19} />
      </StatusBar>

      <Taskbar>
        <Glow viewBox="0 0 2133 49" preserveAspectRatio="none">
          <defs>
            <filter id="soft" x="-20%" y="-50%" width="140%" height="200%"><feGaussianBlur stdDeviation="4" /></filter>
          </defs>
          <path d="M1432 -4Q1490 16 1528 56" fill="none" stroke="#a9d2ff" strokeWidth="13" filter="url(#soft)" />
          <path d="M960 -4Q880 20 800 56M690 18Q900 40 1300 -6" fill="none" stroke="#6db4ef" strokeWidth="12" opacity=".3" filter="url(#soft)" />
        </Glow>
        <Start aria-label="开始">
          <svg width="50" height="50" viewBox="0 0 50 50">
            <defs>
              <radialGradient id="orb" cx=".5" cy=".8" r=".8"><stop offset="0" stopColor="#5fd0f5" /><stop offset=".5" stopColor="#1c6aa8" /><stop offset="1" stopColor="#16426e" /></radialGradient>
            </defs>
            <circle cx="25" cy="25" r="23" fill="url(#orb)" stroke="#9fc3e0" />
            <path d="M14 14q5-4 10-1l-2 11q-5-3-10 0z" fill="#ee6a2c" />
            <path d="M26 14q5 3 10-1l-2 11q-5 4-10 1z" fill="#8dc63f" />
            <path d="M11 26q6-3 10 0l-2 11q-5-3-10 0z" fill="#3fa3e3" />
            <path d="M23 27q5 3 10-1l-2 11q-5 4-10 1z" fill="#fbc52d" />
            <path d="M4 22a21 21 0 0 1 42 0q-21-8-42 0z" fill="#fff" opacity=".35" />
          </svg>
        </Start>
        <TaskButton aria-label="PowerPoint">
          <svg width="46" height="44" viewBox="0 0 46 44">
            <circle cx="25" cy="22" r="20" fill="#e8643a" /><path d="M25 2a20 20 0 0 1 20 20H25z" fill="#f59a72" />
            <rect x="2" y="11" width="23" height="23" rx="2" fill="#c8421f" />
            <text x="7" y="29" fontFamily="Lato, sans-serif" fontWeight="900" fontSize="18" fill="#fff">P</text>
          </svg>
        </TaskButton>
        <TaskButton aria-label="播放器">
          <svg width="44" height="44" viewBox="0 0 44 44">
            <rect x="2" y="2" width="40" height="40" fill="#4a93c4" stroke="#0b8cf5" strokeWidth="4" /><path d="M17 15l11 7-11 8z" fill="#0b7ee0" />
          </svg>
        </TaskButton>
        <TaskButton $on aria-label="SOLIDWORKS 2020">
          <svg width="46" height="46" viewBox="0 0 46 46">
            <path d="M2 8l22 4 18-7v30L24 45z" fill="#8f140e" /><path d="M2 8l22 4v33L2 37z" fill="#d8372b" /><path d="M2 8L20 1l22 4-18 7z" fill="#ee6a5a" />
            <text x="5" y="31" fontFamily="Lato, sans-serif" fontWeight="900" fontSize="22" fill="#fff">SW</text>
            <text x="18" y="44" fontFamily="Lato, sans-serif" fontWeight="900" fontSize="12" fill="#fff">2020</text>
          </svg>
        </TaskButton>
        <Tray>
          <TrayCell $w={22} aria-label="输入法"><Icon n="sogou" s={22} /></TrayCell>
          <TrayCell $w={38} aria-label="帮助"><Icon n="winHelp" /></TrayCell>
          <TrayCell $w={16} aria-label="语言栏">
            <svg width="10" height="8" viewBox="0 0 10 8"><path d="M1 3h6v4H1zM3 3V1h6v4H7" fill="none" stroke="#fff" strokeWidth="1.3" /></svg>
            <Caret $tone="#fff" />
          </TrayCell>
          <TrayCell $w={34} aria-label="显示隐藏的图标"><Caret $dir="up" $tone="#fff" $big /></TrayCell>
          <TrayCell $w={38} aria-label="操作中心"><Icon n="flag" /></TrayCell>
          <TrayCell $w={30} aria-label="电源"><Icon n="battery" s={22} /></TrayCell>
          <TrayCell $w={36} aria-label="网络"><Icon n="signal" s={17} /></TrayCell>
          <Clock>16:03<br />2022/3/11</Clock>
          <ShowDesktop aria-label="显示桌面" />
        </Tray>
      </Taskbar>

      <ImeBar>
        <ImeLogo><Icon n="sogou" s={43} /></ImeLogo>
        <span>中</span>
        <Icon n="punct" s={18} />
        <Icon n="mic" s={20} />
        <Icon n="keyboard" s={20} />
        <Icon n="apps" s={20} />
      </ImeBar>

      <Watermark>
        <svg width="102" height="56" viewBox="0 0 102 56" opacity=".32">
          <path d="M4 2l4 42q12 4 14-8t-13-8M26 14l4 32M32 12l4 34M40 4l3 42M54 2l4 42q12 4 14-8t-13-8M76 14l4 32M82 12l4 34M91 4l3 42" fill="none" stroke="#fff" strokeWidth="4" />
        </svg>
        <span>BV12h411V7jj P48 18:30/29:02</span>
      </Watermark>
    </Shell>
  );
}
